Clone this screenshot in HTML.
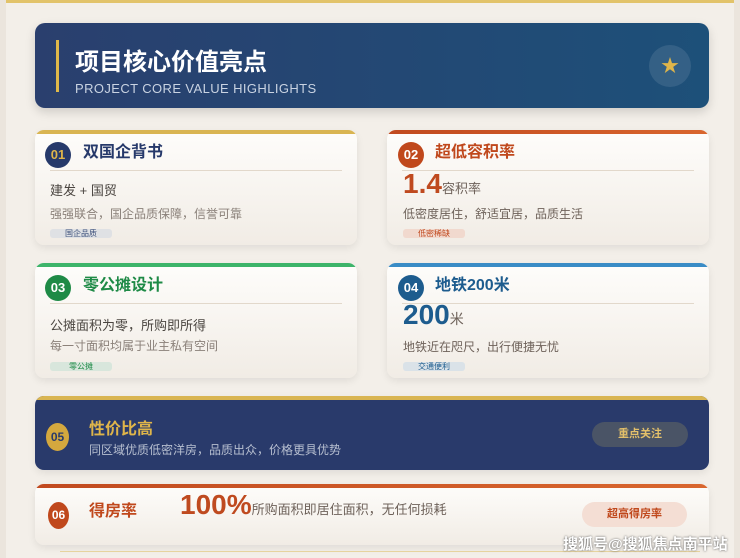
<!DOCTYPE html>
<html><head><meta charset="utf-8"><style>
*{margin:0;padding:0;box-sizing:border-box}
body{width:740px;height:558px;background:#ebe5dd;font-family:"Liberation Sans","Noto Sans CJK SC",sans-serif;position:relative;overflow:hidden}
.panel{position:absolute;left:6px;top:0;width:728px;height:558px;background:#f3efe9;border-top:3px solid #e2c36a}
.abs{position:absolute}
.hdr{left:35px;top:23px;width:674px;height:85px;border-radius:10px;background:linear-gradient(90deg,#2a3f6e,#1d5079);box-shadow:0 4px 10px rgba(0,0,0,.15)}
.card{position:absolute;border-radius:9px;background:linear-gradient(#fefdfb,#f1ece5);box-shadow:0 3px 8px rgba(0,0,0,.08);overflow:hidden}
.bar{position:absolute;left:0;top:0;right:0;height:4px}
.num{position:absolute;width:26px;height:26px;border-radius:50%;color:#fff;font-weight:bold;font-size:13px;text-align:center;line-height:26px}
.t{position:absolute;font-weight:bold;font-size:16px}
.line{position:absolute;left:15px;right:15px;height:1px;background:#e2d8cb}
.s1{position:absolute;font-size:13px;color:#4a4540}
.s2{position:absolute;font-size:12px;color:#8a8079}
.tag{position:absolute;width:62px;height:9px;border-radius:3px;font-size:8px;line-height:9px;text-align:center}
</style></head><body>
<div class="panel"></div>
<div class="abs hdr">
 <div class="abs" style="left:21px;top:17px;width:3px;height:52px;background:#e0b94a"></div>
 <div class="abs" style="left:40px;top:19px;font-size:24px;font-weight:bold;color:#fff">项目核心价值亮点</div>
 <div class="abs" style="left:40px;top:58px;font-size:13px;color:#c9d3e2;letter-spacing:0.4px">PROJECT CORE VALUE HIGHLIGHTS</div>
 <div class="abs" style="left:614px;top:22px;width:42px;height:42px;border-radius:50%;background:rgba(255,255,255,.1);color:#dfb54a;font-size:18px;text-align:center;line-height:42px">★</div>
</div>

<div class="card" style="left:35px;top:130px;width:322px;height:115px">
 <div class="bar" style="background:#d9b552"></div>
 <div class="num" style="left:10px;top:12px;background:#26396a;color:#dfb54a">01</div>
 <div class="t" style="left:48px;top:8px;color:#26396a">双国企背书</div>
 <div class="line" style="top:40px"></div>
 <div class="s1" style="left:15px;top:50px">建发 + 国贸</div>
 <div class="s2" style="left:15px;top:75px">强强联合，国企品质保障，信誉可靠</div>
 <div class="tag" style="left:15px;top:99px;background:#dfe1e4;color:#3b4f7a">国企品质</div>
</div>
<div class="card" style="left:387px;top:130px;width:322px;height:115px">
 <div class="bar" style="background:linear-gradient(90deg,#c14a1f,#d9662e)"></div>
 <div class="num" style="left:11px;top:12px;background:#c0481c">02</div>
 <div class="t" style="left:48px;top:8px;color:#c0481c">超低容积率</div>
 <div class="line" style="top:40px"></div>
 <div class="abs" style="left:16px;top:38px;font-size:28px;font-weight:bold;color:#bf4a1f">1.4<span style="font-size:13px;font-weight:normal;color:#6e625a">容积率</span></div>
 <div class="s2" style="left:16px;top:75px;color:#6e625a">低密度居住，舒适宜居，品质生活</div>
 <div class="tag" style="left:16px;top:99px;background:#f1d9ce;color:#c0481c">低密稀缺</div>
</div>
<div class="card" style="left:35px;top:263px;width:322px;height:115px">
 <div class="bar" style="background:#3db46a"></div>
 <div class="num" style="left:10px;top:12px;background:#1e8a46">03</div>
 <div class="t" style="left:48px;top:8px;color:#1e8a46">零公摊设计</div>
 <div class="line" style="top:40px"></div>
 <div class="s1" style="left:15px;top:52px">公摊面积为零，所购即所得</div>
 <div class="s2" style="left:15px;top:74px">每一寸面积均属于业主私有空间</div>
 <div class="tag" style="left:15px;top:99px;background:#d8e6dc;color:#1e8a46">零公摊</div>
</div>
<div class="card" style="left:387px;top:263px;width:322px;height:115px">
 <div class="bar" style="background:#3a8cc6"></div>
 <div class="num" style="left:11px;top:12px;background:#1d5c8e">04</div>
 <div class="t" style="left:48px;top:8px;color:#1d5c8e">地铁200米</div>
 <div class="line" style="top:40px"></div>
 <div class="abs" style="left:16px;top:36px;font-size:28px;font-weight:bold;color:#1d5c8e">200<span style="font-size:14px;font-weight:normal;color:#6e625a">米</span></div>
 <div class="s2" style="left:16px;top:75px;color:#6e625a">地铁近在咫尺，出行便捷无忧</div>
 <div class="tag" style="left:16px;top:99px;background:#dae2e8;color:#1d5c8e">交通便利</div>
</div>
<div class="card" style="left:35px;top:396px;width:674px;height:74px;background:#293a6b">
 <div class="bar" style="background:#d9b552"></div>
 <div class="num" style="left:11px;top:27px;width:23px;height:28px;background:#d4a83e;color:#2a3a6a;line-height:28px;font-size:12px">05</div>
 <div class="t" style="left:54px;top:19px;color:#dfb54a">性价比高</div>
 <div class="s2" style="left:54px;top:45px;color:#b7bfd0">同区域优质低密洋房，品质出众，价格更具优势</div>
 <div class="abs" style="left:557px;top:26px;width:96px;height:25px;border-radius:13px;background:#4a5466;color:#e3c06a;font-size:11px;font-weight:bold;text-align:center;line-height:25px">重点关注</div>
</div>
<div class="card" style="left:35px;top:484px;width:674px;height:61px">
 <div class="bar" style="background:linear-gradient(90deg,#c14a1f,#d9662e)"></div>
 <div class="num" style="left:13px;top:18px;width:21px;height:27px;background:#c0481c;line-height:27px;font-size:12px">06</div>
 <div class="t" style="left:54px;top:13px;color:#c0481c">得房率</div>
 <div class="abs" style="left:145px;top:5px;font-size:28px;font-weight:bold;color:#bf4a1f">100%<span style="font-size:13px;font-weight:normal;color:#6e625a">所购面积即居住面积，无任何损耗</span></div>
 <div class="abs" style="left:547px;top:18px;width:105px;height:25px;border-radius:13px;background:#f4ded4;color:#c0481c;font-size:11px;font-weight:bold;text-align:center;line-height:25px">超高得房率</div>
</div>
<div class="abs" style="left:60px;top:551px;width:640px;height:1px;background:#e6d39e"></div>
<div class="abs" style="left:563px;top:533px;font-size:15px;font-weight:bold;color:#fff;text-shadow:0 0 2px #555">搜狐号@搜狐焦点南平站</div>
</body></html>
